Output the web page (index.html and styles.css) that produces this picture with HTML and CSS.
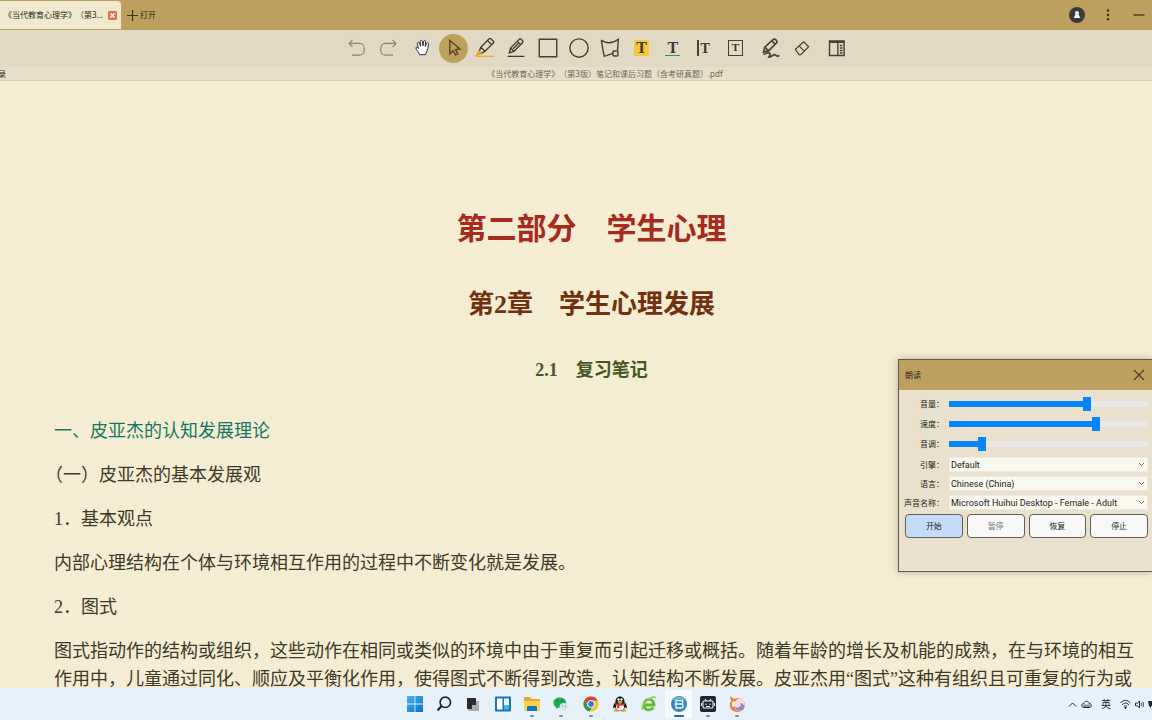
FILE: index.html
```html
<!DOCTYPE html>
<html lang="zh-CN">
<head>
<meta charset="utf-8">
<title>《当代教育心理学》</title>
<link rel="stylesheet" href="styles.css">
</head>
<body>
<header class="titlebar">
  <div class="tab"><span class="tab-name">《当代教育心理学》（第3...</span>
    <button class="tab-close" aria-label="关闭标签"><svg width="9" height="9" viewBox="0 0 9 9"><rect width="9" height="9" rx="1" fill="#dd744b"/><path d="M2.5 2.5l4 4m0-4l-4 4" stroke="#fff" stroke-width="1.6"/></svg></button>
  </div>
  <button class="open"><svg width="11" height="11" viewBox="0 0 11 11"><path d="M5.5 0v11M0 5.5h11" stroke="#40331a" stroke-width="1.2"/></svg><span>打开</span></button>
  <div class="window-tools">
    <button aria-label="账户"><svg width="16" height="16" viewBox="0 0 16 16"><circle cx="8" cy="8" r="8" fill="#3c3b37"/><path d="M8 4c1.500 0 2.200 1 1.900 2.200l-.3 1.300 1.700 3.500H4.700l1.700-3.500-.3-1.300C5.800 5 6.500 4 8 4z" fill="#f4f8ff"/></svg></button>
    <button aria-label="菜单"><svg width="16" height="16" viewBox="0 0 16 16" fill="#3b2b13"><circle cx="8" cy="3.500" r="1.200"/><circle cx="8" cy="8" r="1.200"/><circle cx="8" cy="12.300" r="1.200"/></svg></button>
    <button aria-label="最小化"><svg width="16" height="16" viewBox="0 0 16 16"><path d="M2.500 8h11" stroke="#3b2b13" stroke-width="1.200"/></svg></button>
  </div>
</header>

<nav class="toolbar" aria-label="工具">
  <div class="tools history">
    <button aria-label="撤销"><svg viewBox="0 0 24 24" class="line faded"><path d="M6.500 2.500L2.500 6.500l4 4M2.500 6.500h13c7 0 7 14 0 14H6"/></svg></button>
    <button aria-label="重做"><svg viewBox="0 0 24 24" class="line faded"><path d="M17.500 2.500l4 4-4 4M21.500 6.500h-13c-7 0-7 14 0 14H18"/></svg></button>
  </div>
  <div class="tools marks">
    <button aria-label="手形"><svg viewBox="0 0 24 24"><path d="M8 20c-1-3-4-5-4.500-8 0-1.500 2-1.500 3 .8L5.200 7c-.5-2 1.700-2.800 2.400-1l1.500 4L8.700 4.500c0-2 2.200-2.200 2.600-.3l.6 5.300.8-5.300c.3-1.800 2.500-1.500 2.400.4l-.4 5.700 1.600-3.800c.8-1.700 2.700-.8 2.300 1C18 10 17.700 15 15.700 18l-.5 2z" fill="#fff" stroke="#333" stroke-width="1.200"/></svg></button>
    <button class="active" aria-label="选择"><svg viewBox="0 0 24 24"><path d="M7 3v16l4-3.800 2.800 5.300 2.800-1.500-2.700-5 5.300-.8z" fill="none" stroke="#59461f" stroke-width="1.700"/></svg></button>
    <button aria-label="荧光笔"><svg viewBox="0 0 24 24" class="line"><path d="M7 11L17 1q1-1 2 0l3 3q1 1 0 2L12 16zM7 11l-2 5 2.500 2.500L12 16M15 3l5 5"/><path d="M5 16l-3 4.500 5.500-2z" fill="#e7a515" stroke="#e7a515"/><path d="M1 22h22" stroke="#e9b12e"/></svg></button>
    <button aria-label="铅笔"><svg viewBox="0 0 24 24" class="line"><path d="M4 18l1.500-6L16 1.500c2-1 5 2 4 4L9.500 16zM13.500 4l4.500 4.500M5.500 12l4 4M8.500 13l7-7M2 22h20"/></svg></button>
    <button aria-label="矩形"><svg viewBox="0 0 24 24" class="line"><path d="M1.500 1.500h21v21h-21z"/></svg></button>
    <button aria-label="椭圆"><svg viewBox="0 0 24 24" class="line"><circle cx="12" cy="12" r="11"/></svg></button>
    <button aria-label="多边形"><svg viewBox="0 0 24 24" class="line"><path d="M1.500 2.500q10 7 20.500-1L21 15M15.500 18.500L5 22 1.500 2.500"/><rect x="15.500" y="15.500" width="6" height="6" rx="1"/></svg></button>
    <button class="glyph highlight" aria-label="高亮文本"><span>T</span></button>
    <button class="glyph underline" aria-label="下划线"><span>T</span></button>
    <button class="glyph insert" aria-label="插入文本"><span>T</span></button>
    <button class="glyph boxed" aria-label="文本框"><span>T</span></button>
  </div>
  <div class="tools drawing">
    <button aria-label="签名"><svg viewBox="0 0 24 24" class="line thick"><path d="M3 17l1.500-6L15 1.500c2-1 5 2 4 4L9 15.500zM13 3.500l4 4M4.500 11l4.500 4.500M3 20c3-2 7-3 8-1 1 3-4 4-1 4s5-4 7-3 2 3 5 1"/></svg></button>
    <button aria-label="橡皮擦"><svg viewBox="0 0 24 24" class="line thin"><path d="M4 13.500l10-9 6 6-9.500 9.500h-2zM8.500 9.500l6 6"/></svg></button>
  </div>
  <div class="tools side">
    <button aria-label="侧栏"><svg viewBox="0 0 24 24" class="line"><path d="M3 3.500h17.500v17.500H3zM13 4v17M3 5h17.500"/><path d="M15.500 9h3M15.500 12h3M15.500 15h3M15.500 18h3"/></svg></button>
  </div>
</nav>

<div class="pathbar"><span class="outline-label">录</span><span class="filename">《当代教育心理学》（第3版）笔记和课后习题（含考研真题）.pdf</span></div>

<main class="document">
  <h1>第二部分　学生心理</h1>
  <h2>第2章　学生心理发展</h2>
  <h3>2.1　复习笔记</h3>
  <h4>一、皮亚杰的认知发展理论</h4>
  <p>（一）皮亚杰的基本发展观</p>
  <p>1．基本观点</p>
  <p>内部心理结构在个体与环境相互作用的过程中不断变化就是发展。</p>
  <p>2．图式</p>
  <p>图式指动作的结构或组织，这些动作在相同或类似的环境中由于重复而引起迁移或概括。随着年龄的增长及机能的成熟，在与环境的相互作用中，儿童通过同化、顺应及平衡化作用，使得图式不断得到改造，认知结构不断发展。皮亚杰用“图式”这种有组织且可重复的行为或</p>
</main>

<section class="dialog" role="dialog" aria-labelledby="dialog-title">
  <div class="dialog-head"><span id="dialog-title">朗读</span>
    <button aria-label="关闭"><svg width="12" height="12" viewBox="0 0 12 12"><path d="M1 1l10 10M11 1L1 11" stroke="#4c3c1f" stroke-width="1.200"/></svg></button>
  </div>
  <form class="dialog-body">
    <div class="fields sliders">
      <label for="volume">音量：</label><input id="volume" type="range" min="0" max="100" value="70" style="--value:70%">
      <label for="speed">速度：</label><input id="speed" type="range" min="0" max="100" value="75" style="--value:75%">
      <label for="pitch">音调：</label><input id="pitch" type="range" min="0" max="100" value="15" style="--value:15%">
    </div>
    <div class="fields selects">
      <label for="engine">引擎：</label><select id="engine"><option>Default</option></select>
      <label for="language">语言：</label><select id="language"><option>Chinese (China)</option></select>
      <label for="voice">声音名称：</label><select id="voice"><option>Microsoft Huihui Desktop - Female - Adult</option></select>
    </div>
    <div class="actions">
      <button type="button" class="primary">开始</button>
      <button type="button" disabled>暂停</button>
      <button type="button">恢复</button>
      <button type="button">停止</button>
    </div>
  </form>
</section>

<footer class="taskbar">
  <div class="apps">
    <button aria-label="开始菜单"><svg viewBox="0 0 16 16"><defs><linearGradient id="win" x2="1" y2="1"><stop stop-color="#43b5ed"/><stop offset="1" stop-color="#0874ca"/></linearGradient></defs><path d="M0 0h7.600v7.600H0zM8.400 0H16v7.600H8.400zM0 8.400h7.600V16H0zM8.400 8.400H16V16H8.400z" fill="url(#win)"/></svg></button>
    <button aria-label="搜索"><svg viewBox="0 0 16 16" fill="none" stroke="#222" stroke-width="1.600"><circle cx="9.300" cy="6.300" r="5.200"/><path d="M5.500 10L1.500 14.500" stroke-width="2"/></svg></button>
    <button aria-label="任务视图"><svg viewBox="0 0 16 16"><path d="M6 5h8v10H3v-3z" fill="#a9abae"/><path d="M2 2h9v7H7v4H2z" fill="#292b31"/></svg></button>
    <button aria-label="小组件"><svg viewBox="0 0 16 16"><rect width="16" height="15" y=".5" rx="1" fill="#1d72b7"/><path d="M2 2.500h5.500v11H2z" fill="#fff"/><path d="M9 2.500h5v7H9z" fill="#e1f5ff"/><path d="M9 9.500h5v4H9z" fill="#47aee7"/></svg></button>
    <button class="running" aria-label="文件管理器"><svg viewBox="0 0 16 16"><path d="M0 2q0-1 1-1h5l2 2h7q1 0 1 1v9H0z" fill="#e7a827"/><path d="M0 5h16v9q0 1-1 1H1q-1 0-1-1z" fill="#ffd052"/><path d="M3 15v-4q0-1 1-1h8q1 0 1 1v4z" fill="#1674c3"/></svg></button>
    <button class="running" aria-label="微信"><svg viewBox="0 0 16 16"><path d="M7 1.500c-8 0-8 8-3.800 9.500L3 13l2.500-1.400C17 12 14 1.500 7 1.500z" fill="#16ad55"/><path d="M11 7c-6 0-6 7 0 7l2.500 1-.3-1.500C17 11.500 15 7 11 7z" fill="#d9e4e5"/><g fill="#245341"><circle cx="4.800" cy="5" r=".7"/><circle cx="9" cy="5" r=".7"/></g><g fill="#738383"><circle cx="9.500" cy="10" r=".6"/><circle cx="12.500" cy="10" r=".6"/></g></svg></button>
    <button class="running" aria-label="浏览器"><svg viewBox="0 0 16 16"><circle cx="8" cy="8" r="7.500" fill="#f7c62f"/><path d="M1.500 4A7.500 7.500 0 0 1 14.600 4.500H8A3.500 3.500 0 0 0 4.700 9z" fill="#df4236"/><path d="M1.500 4l3.400 6 3.900 1.400-2.200 4A7.500 7.500 0 0 1 1.500 4z" fill="#2c9b50"/><circle cx="8" cy="8" r="3.800" fill="#fff"/><circle cx="8" cy="8" r="2.900" fill="#347de1"/></svg></button>
    <button aria-label="QQ"><svg viewBox="0 0 16 16"><ellipse cx="4.500" cy="14.500" rx="3" ry="1.300" fill="#e9a021"/><ellipse cx="11.500" cy="14.500" rx="3" ry="1.300" fill="#e9a021"/><path d="M3.500 6C3-1.500 13-1.500 12.500 6c2 2.500 2.800 4.500 2 6.500L13 11c-1 5-9 5-10 0l-1.500 1.500c-.8-2 0-4 2-6.500z" fill="#17191c"/><ellipse cx="8" cy="11" rx="4" ry="3.600" fill="#fff"/><path d="M3.300 6.500c2.500 2 7 2 9.400 0l.5 2c-2 1-4 1.500-6 1.200v2.500H5V9.300l-2.200-.8z" fill="#df3427"/><circle cx="6.500" cy="3.500" r="1.200" fill="#fff"/><circle cx="9.500" cy="3.500" r="1.200" fill="#fff"/><ellipse cx="8" cy="6" rx="2.700" ry=".9" fill="#efac22"/></svg></button>
    <button aria-label="安全浏览器"><svg viewBox="0 0 16 16" fill="none"><path d="M4 9h9c0-8-10-7-10 0 0 6 7 6 9.500 2.500" stroke="#67b832" stroke-width="2.800"/><path d="M1.500 14C-1 10 11-2 15 2" stroke="#8fcb42" stroke-width="1.500"/></svg></button>
    <button class="running current" aria-label="阅读器"><svg viewBox="0 0 16 16"><circle cx="8" cy="8" r="8" fill="#3788b9"/><path d="M2.500 4c3-3 8-3 11 0" stroke="#77bad8" stroke-width="2" fill="none"/><path d="M4.500 4.500H10c2.500 0 2.500 3.500 0 3.500H3.500H10c2.800 0 2.800 4 0 4H4.500M5 4.500V12" stroke="#e7f8ff" stroke-width="1.300" fill="none"/></svg></button>
    <button class="running" aria-label="直播"><svg viewBox="0 0 16 16"><rect width="16" height="16" rx="2" fill="#202630"/><path d="M4 5h8q1 0 1 1v5q0 1-1 1H4q-1 0-1-1V6q0-1 1-1zM5 3l1.500 2M11 3L9.500 5M1.500 7v3M14.500 7v3M6 7.500V9M10 7.500V9M6 10.500h4" stroke="#edf2f7" stroke-width="1.100" fill="none"/></svg></button>
    <button class="running" aria-label="助手"><svg viewBox="0 0 16 16"><path d="M1 0l4 3c7-3 11 2 11 6 0 5-4 7-8 7-6 0-9-6-6-11z" fill="#ec8136"/><path d="M8 3l5-1c3 3 4 9 0 12-5 3-9-2-7-6z" fill="#f0dce4"/><path d="M11 7c2 3-1 6-5 4 1 5 8 5 9 0 0-2-1-4-4-4z" fill="#8d86c5"/><path d="M3 6l4-1-1 5-3 1z" fill="#fff2df"/></svg></button>
  </div>
  <div class="tray">
    <svg width="9" height="9" viewBox="0 0 9 9"><path d="M1 6.500L4.500 3 8 6.500" class="tray-line"/></svg>
    <svg width="11" height="10" viewBox="0 0 11 10"><path d="M2.500 8.500C0 8 0 4.800 2.800 4.500c.5-3 4.900-3 5.400 0C11 4.800 11 8 8.500 8.500z" class="tray-line"/><path d="M2 5.500h7v2.500H2z" fill="#8b9299"/></svg>
    <span>英</span>
    <svg width="11" height="10" viewBox="0 0 11 10"><path d="M.5 4c3-3.500 7-3.500 10 0M2.200 5.800c2-2.200 4.600-2.200 6.600 0M3.900 7.500c1-1 2.200-1 3.200 0" class="tray-line"/><circle cx="5.500" cy="8.800" r="1"/></svg>
    <svg width="9" height="9" viewBox="0 0 9 9"><path d="M.5 3.200h1.800L4.500 1v7L2.300 5.800H.5zM6 3c1 1 1 2 0 3M7.300 1.700c2 2 2 3.700 0 5.600" class="tray-line"/></svg>
    <svg width="4" height="9" viewBox="0 0 4 9"><path d="M0 1h4v5H3v2L1 6z" fill="#22272d"/></svg>
  </div>
</footer>
</body>
</html>
```

FILE: styles.css
```css
* { box-sizing: border-box; }
body {
  margin: 0;
  height: 100vh;
  display: flex;
  flex-direction: column;
  position: relative;
  overflow: hidden;
  background: #f4ecd3;
  color: #40392b;
  font: 8px/12px "Noto Sans", "Noto Sans CJK SC", sans-serif;
}
button {
  padding: 0;
  border: 0;
  background: none;
  color: inherit;
  font: inherit;
  display: flex;
  align-items: center;
  justify-content: center;
}
svg { display: block; }

.titlebar {
  flex: none;
  height: 30px;
  display: flex;
  align-items: center;
  background: #bd9f5e;
  color: #2e2618;
}
.tab {
  align-self: stretch;
  width: 121px;
  margin: 1px 0;
  padding: 0 4px;
  display: flex;
  align-items: center;
  justify-content: space-between;
  border-radius: 0 4px 0 0;
  background: #f1e8d0;
  white-space: nowrap;
}
.tab-name, .filename { text-spacing-trim: space-all; }
.open { margin-left: 6px; gap: 2px; }
.window-tools {
  margin-left: auto;
  padding-right: 5px;
  display: flex;
  gap: 15px;
}

.toolbar {
  flex: none;
  height: 37px;
  padding: 0 0 1px 41px;
  display: flex;
  align-items: center;
  justify-content: center;
  gap: 4px;
  background: #e1d9c3;
}
.tools {
  display: grid;
  grid-auto-flow: column;
  grid-auto-columns: 1fr;
  justify-items: center;
}
.history, .drawing { width: 62px; }
.marks { width: 344px; }
.side { width: 31px; }
.tools button { width: 29px; height: 29px; }
.tools svg { width: 20px; height: 20px; }
.tools .active { border-radius: 50%; background: #bd9f5e; }
.line { fill: none; stroke: #484133; stroke-width: 1.7; }
.thick { stroke-width: 2; }
.thin { stroke-width: 1.4; }
.faded { stroke: #8b8474; stroke-width: 1.5; }
.glyph span {
  width: 15px;
  height: 16px;
  font: bold 16px/16px "Liberation Serif", serif;
  text-align: center;
}
.highlight span { background: #f8c73a; }
.underline span { border-bottom: 1px solid #369567; }
.insert span { border-left: 2px solid #484133; font-size: 14px; line-height: 18px; }
.boxed span { border: 1px solid #484133; font-size: 11px; line-height: 13px; }

.pathbar {
  flex: none;
  height: 14px;
  display: flex;
  align-items: center;
  background: #e7dfc9;
  border-bottom: 1px solid #d2c8ae;
}
.outline-label { width: 58px; text-indent: -2px; color: #211d15; }
.filename { flex: 1; text-align: center; color: #6d6656; }

.document {
  flex: 1;
  min-height: 0;
  overflow: hidden;
  padding: 126px 17px 0 54px;
  font: 18px/28px "Liberation Serif", "Noto Sans CJK SC", serif;
  text-spacing-trim: trim-start;
}
h1, h2, h3 { padding-right: 6px; text-align: center; }
h1 { margin: 0 0 35px; font-size: 30px; line-height: 44px; color: #a72a1e; }
h2 { margin: 0 0 32px; font-size: 26px; line-height: 38px; color: #71300f; }
h3 { margin: 0 0 33px; font-size: 18px; line-height: 28px; color: #47571f; }
h4 { margin: 0 0 16px; font-size: 18px; font-weight: normal; color: #147862; }
p { margin: 0 0 16px; }

.dialog {
  position: absolute;
  top: 359px;
  right: 0;
  width: 254px;
  height: 213px;
  border: 1px solid #625b4e;
  border-right: 0;
  background: #e9e1cd;
  color: #211e18;
  box-shadow: 0 0 7px #81796788;
}
.dialog-head {
  height: 30px;
  padding: 0 7px 0 6px;
  display: flex;
  align-items: center;
  justify-content: space-between;
  background: #bd9f5e;
}
.dialog-body { padding: 4px 4px 0 6px; }
.fields {
  display: grid;
  grid-template-columns: 39px 1fr;
  column-gap: 5px;
  align-items: center;
}
.fields label { justify-self: end; white-space: nowrap; }
.sliders { grid-auto-rows: 20px; }
.selects { grid-auto-rows: 15px; row-gap: 4px; padding-top: 3px; }
input[type="range"] {
  appearance: none;
  width: 100%;
  height: 14px;
  margin: 0;
  background: none;
}
input[type="range"]::-webkit-slider-runnable-track {
  height: 6px;
  background: linear-gradient(90deg, #0585fb var(--value), #e9e8e6 var(--value));
}
input[type="range"]::-webkit-slider-thumb {
  appearance: none;
  width: 8px;
  height: 14px;
  margin-top: -4px;
  background: #0585fb;
}
select {
  appearance: none;
  width: 100%;
  height: 15px;
  padding: 0 14px 0 1px;
  border: 1px solid #eeeadf;
  border-radius: 0;
  background: #faf7ee url("data:image/svg+xml,%3Csvg xmlns='http://www.w3.org/2000/svg' width='7' height='5'%3E%3Cpath d='M1 1l2.500 2.500L6 1' fill='none' stroke='%23666'/%3E%3C/svg%3E") no-repeat right 2px center;
  color: #211e18;
  font: 9px/12px Roboto, "Noto Sans", sans-serif;
}
.actions {
  display: grid;
  grid-template-columns: repeat(4, 1fr);
  gap: 4px;
  padding-top: 4px;
}
.actions button {
  height: 24px;
  border: 1px solid #625f5b;
  border-radius: 4px;
  background: #f8f8f7;
}
.actions .primary { background: #c5dcf8; }
.actions button:disabled { color: #797979; }

.taskbar {
  flex: none;
  height: 32px;
  display: grid;
  grid-template-columns: 1fr 352px 1fr;
  background: #e7f1f9;
}
.apps {
  grid-column: 2;
  display: grid;
  grid-template-columns: repeat(12, 1fr);
}
.apps button { position: relative; }
.apps svg { width: 16px; height: 16px; }
.apps .running::after {
  content: "";
  position: absolute;
  bottom: 3px;
  width: 4px;
  height: 2px;
  border-radius: 1px;
  background: #848c94;
}
.apps .current { margin: 2px 1px; border-radius: 3px; background: #f8fcff; }
.apps .current::after { bottom: 1px; width: 10px; background: #1769b0; }
.tray {
  display: flex;
  align-items: center;
  justify-content: flex-end;
  gap: 4px;
  color: #22272d;
  font-size: 10px;
}
.tray span { margin: 0 5px; }
.tray-line { fill: none; stroke: #22272d; stroke-width: 1; }
```
